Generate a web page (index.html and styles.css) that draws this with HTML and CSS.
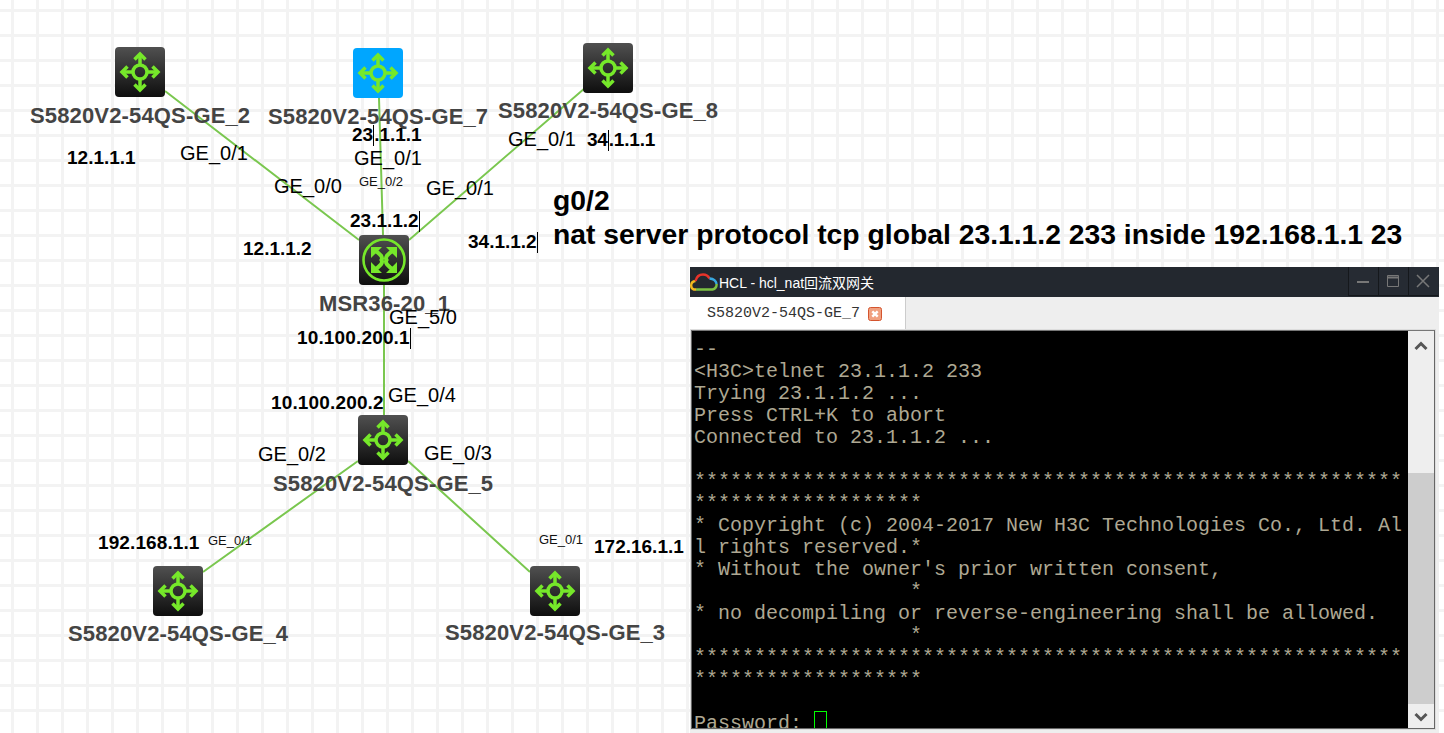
FILE: index.html
```html
<!DOCTYPE html>
<html lang="zh">
<head>
<meta charset="utf-8">
<title>HCL - hcl_nat回流双网关</title>
<link rel="stylesheet" href="styles.css">
</head>
<body>
<svg class="defs" width="0" height="0" aria-hidden="true">
  <defs>
    <symbol id="sw-glyph" viewBox="0 0 50 50">
      <g fill="none" stroke="#76e82a" stroke-width="3.500">
        <circle cx="25" cy="25" r="7"/>
        <path d="M25 18V7M25 32V43M18 25H7M32 25H43"/>
        <path d="M19.500 12.500L25 7l5.500 5.500M19.500 37.500L25 43l5.500-5.500M12.500 19.500L7 25l5.500 5.500M37.500 19.500L43 25l-5.500 5.500"/>
      </g>
    </symbol>
    <symbol id="rt-glyph" viewBox="0 0 50 50">
      <circle cx="25" cy="25" r="20.500" fill="none" stroke="#76e82a" stroke-width="2.600"/>
      <g fill="none" stroke="#76e82a" stroke-width="4">
        <path d="M15 15Q25 21 22.500 25 25 29 15 35M35 15Q25 21 27.500 25 25 29 35 35"/>
      </g>
      <g fill="#76e82a">
        <path d="M12 12h11l-11 11zM38 12h-11l11 11zM12 38h11l-11-11zM38 38h-11l11-11z"/>
      </g>
    </symbol>
  </defs>
</svg>

<main class="canvas">
  <svg class="links" width="1444" height="733" aria-hidden="true">
    <path d="M165 91L359 240M379 98L383 235M585 88L409 240M384 285V415M358 461L203 572M408 461L530 572"/>
  </svg>

  <div class="device sw2"><svg class="glyph"><use href="#sw-glyph"/></svg></div>
  <div class="device sw7"><svg class="glyph"><use href="#sw-glyph"/></svg></div>
  <div class="device sw8"><svg class="glyph"><use href="#sw-glyph"/></svg></div>
  <div class="device msr"><svg class="glyph"><use href="#rt-glyph"/></svg></div>
  <div class="device sw5"><svg class="glyph"><use href="#sw-glyph"/></svg></div>
  <div class="device sw4"><svg class="glyph"><use href="#sw-glyph"/></svg></div>
  <div class="device sw3"><svg class="glyph"><use href="#sw-glyph"/></svg></div>

  <div class="name n2">S5820V2-54QS-GE_2</div>
  <div class="name n7">S5820V2-54QS-GE_7</div>
  <div class="name n8">S5820V2-54QS-GE_8</div>
  <div class="name nm">MSR36-20_1</div>
  <div class="name n5">S5820V2-54QS-GE_5</div>
  <div class="name n4">S5820V2-54QS-GE_4</div>
  <div class="name n3">S5820V2-54QS-GE_3</div>

  <div class="ip i1">12.1.1.1</div>
  <div class="ip i2">12.1.1.2</div>
  <div class="ip i3">23<span class="caret"></span>.1.1.1</div>
  <div class="ip i4">23.1.1.2<span class="caret"></span></div>
  <div class="ip i5">34<span class="caret"></span>.1.1.1</div>
  <div class="ip i6">34.1.1.2<span class="caret"></span></div>
  <div class="ip i7">10.100.200.1<span class="caret"></span></div>
  <div class="ip i8">10.100.200.2</div>
  <div class="ip i9">192.168.1.1</div>
  <div class="ip i10">172.16.1.1</div>

  <div class="port p1">GE_0/1</div>
  <div class="port p2">GE_0/0</div>
  <div class="port p3">GE_0/1</div>
  <div class="port p4">GE_0/1</div>
  <div class="port p5">GE_0/1</div>
  <div class="port p6">GE_5/0</div>
  <div class="port p7">GE_0/4</div>
  <div class="port p8">GE_0/2</div>
  <div class="port p9">GE_0/3</div>
  <div class="port small p10">GE_0/2</div>
  <div class="port small p11">GE_0/1</div>
  <div class="port small p12">GE_0/1</div>

  <div class="note">
    <p>g0/2</p>
    <p>nat server protocol tcp global 23.1.1.2 233 inside 192.168.1.1 23</p>
  </div>

  <section class="window">
    <header class="titlebar">
      <svg class="logo" width="28" height="18" viewBox="0 0 28 18" fill="none" stroke-width="2.400">
        <path d="M6 16.500H4Q1 15.500 1.200 12 1.500 8.500 5.500 8" stroke="#f2b81e"/>
        <path d="M5.500 8Q7 1.500 13 1.500 17.500 1.500 19.500 5.500" stroke="#e8332a"/>
        <path d="M19.500 5.500Q25.800 6 26.600 11" stroke="#37a8e0"/>
        <path d="M26.600 11Q26.800 15.500 22.500 16.500H6" stroke="#7cc243"/>
      </svg>
      <span class="title">HCL - hcl_nat回流双网关</span>
      <div class="winbtns">
        <button class="winbtn" aria-label="minimize"><svg width="14" height="14" viewBox="0 0 14 14"><path d="M1 8H13" stroke="#777" stroke-width="2"/></svg></button>
        <button class="winbtn" aria-label="maximize"><svg width="14" height="14" viewBox="0 0 14 14" fill="none" stroke="#777"><path d="M1.500 1.500H12.500V12.500H1.500Z"/><path d="M1 3.500H13" stroke-width="2"/></svg></button>
        <button class="winbtn" aria-label="close"><svg width="14" height="14" viewBox="0 0 14 14"><path d="M1 1L13 13M13 1L1 13" stroke="#777" stroke-width="1.500"/></svg></button>
      </div>
    </header>
    <nav class="tabs">
      <div class="tab">
        <span>S5820V2-54QS-GE_7</span>
        <svg class="tabclose" width="14" height="14" viewBox="0 0 14 14"><rect x=".5" y=".5" width="13" height="13" rx="2" fill="#f0a080" stroke="#d4542e"/><path d="M4.300 4.300L9.700 9.700M9.700 4.300L4.300 9.700" stroke="#fff" stroke-width="2.400"/></svg>
      </div>
    </nav>
    <div class="termbox">
      <pre class="terminal">--
&lt;H3C&gt;telnet 23.1.1.2 233
Trying 23.1.1.2 ...
Press CTRL+K to abort
Connected to 23.1.1.2 ...

***********************************************************
*******************
* Copyright (c) 2004-2017 New H3C Technologies Co., Ltd. Al
l rights reserved.*
* Without the owner's prior written consent,
                  *
* no decompiling or reverse-engineering shall be allowed.
                  *
***********************************************************
*******************

Password: <span class="cursor"></span></pre>
      <div class="scrollbar">
        <svg width="14" height="10" viewBox="0 0 14 10"><path d="M1.500 8L7 2.500 12.500 8" fill="none" stroke="#555" stroke-width="3"/></svg>
        <div class="track"><div class="thumb"></div></div>
        <svg width="14" height="10" viewBox="0 0 14 10"><path d="M1.500 2L7 7.500 12.500 2" fill="none" stroke="#555" stroke-width="3"/></svg>
      </div>
    </div>
  </section>
</main>
</body>
</html>
```
FILE: styles.css
```css
* { box-sizing: border-box; }
html, body { margin: 0; padding: 0; height: 733px; overflow: hidden; background: #fff; }
.defs { position: absolute; }

.canvas {
  position: relative;
  width: 1444px;
  height: 733px;
  overflow: hidden;
  font-family: "Liberation Sans", Arial, sans-serif;
  background-color: #fff;
  background-image:
    repeating-linear-gradient(to bottom, transparent 0 9px, #f3f3f3 9px 12px, transparent 12px 25px),
    repeating-linear-gradient(to right, transparent 0 11px, #f3f3f3 11px 14px, transparent 14px 25px);
}

.links { position: absolute; left: 0; top: 0; }
.links path { fill: none; stroke: #7ac74f; stroke-width: 2; }

.device {
  position: absolute;
  width: 50px;
  height: 50px;
  border-radius: 4px;
  background: linear-gradient(#505050, #0e0e0e);
}
.glyph { display: block; width: 50px; height: 50px; }
.sw2 { left: 115px; top: 47px; }
.sw7 { left: 353px; top: 48px; background: #00a6ff; }
.sw8 { left: 583px; top: 43px; }
.msr { left: 359px; top: 235px; }
.sw5 { left: 358px; top: 415px; }
.sw4 { left: 153px; top: 566px; }
.sw3 { left: 530px; top: 566px; }

.name, .ip, .port { position: absolute; white-space: nowrap; line-height: 24px; }
.name { font-size: 22px; font-weight: 700; color: #444; letter-spacing: .15px; }
.n2 { left: 30px; top: 104px; }
.n7 { left: 268px; top: 105px; }
.n8 { left: 498px; top: 99px; }
.nm { left: 319px; top: 292px; }
.n5 { left: 273px; top: 472px; }
.n4 { left: 68px; top: 622px; }
.n3 { left: 445px; top: 621px; }

.ip { font-size: 19px; font-weight: 700; color: #000; }
.i1 { left: 67px; top: 146px; }
.i2 { left: 243px; top: 237px; }
.i3 { left: 352px; top: 123px; }
.i4 { left: 350px; top: 209px; }
.i5 { left: 587px; top: 128px; letter-spacing: -.2px; }
.i6 { left: 468px; top: 230px; }
.i7 { left: 297px; top: 326px; letter-spacing: .15px; }
.i8 { left: 271px; top: 391px; letter-spacing: .15px; }
.i9 { left: 98px; top: 531px; letter-spacing: .1px; }
.i10 { left: 594px; top: 535px; }
.caret {
  display: inline-block;
  width: 0;
  height: 21px;
  margin-bottom: -5px;
  border-left: 1px solid #000;
}

.port { font-size: 20px; color: #000; }
.port.small { font-size: 13px; line-height: 16px; color: #111; }
.p1 { left: 180px; top: 141px; }
.p2 { left: 274px; top: 174px; }
.p3 { left: 354px; top: 146px; }
.p4 { left: 426px; top: 176px; }
.p5 { left: 508px; top: 127px; }
.p6 { left: 389px; top: 305px; }
.p7 { left: 388px; top: 383px; }
.p8 { left: 258px; top: 442px; }
.p9 { left: 424px; top: 441px; }
.p10 { left: 359px; top: 174px; }
.p11 { left: 208px; top: 533px; }
.p12 { left: 539px; top: 532px; }

.note {
  position: absolute;
  left: 553px;
  top: 183px;
  font-size: 28.3px;
  font-weight: 700;
  color: #000;
  line-height: 34px;
  white-space: nowrap;
}
.note p { margin: 0; }

.window {
  position: absolute;
  left: 690px;
  top: 267px;
  width: 749px;
  height: 466px;
  display: flex;
  flex-direction: column;
  background: #eee;
}
.titlebar {
  flex: none;
  height: 30px;
  display: flex;
  align-items: center;
  background: #23282f;
  color: #fff;
}
.logo { flex: none; }
.title { margin-left: 1px; font-size: 14px; font-family: "Liberation Sans", "Noto Sans CJK SC", sans-serif; }
.winbtns { margin-left: auto; margin-right: 1px; display: flex; height: 100%; }
.winbtn {
  width: 30px;
  height: 29px;
  padding: 0 2px 0 0;
  display: flex;
  align-items: center;
  justify-content: center;
  background: #262b33;
  border: 0;
  border-left: 1px solid #15181c;
  border-bottom: 1px solid #15181c;
}
.tabs { flex: none; height: 33px; display: flex; }
.tab {
  width: 216px;
  height: 33px;
  padding-left: 17px;
  display: flex;
  align-items: center;
  gap: 8px;
  background: #fff;
  border-right: 1px solid #ccc;
  font-family: "Liberation Mono", monospace;
  font-size: 15px;
  color: #333;
}
.termbox {
  flex: 1;
  display: flex;
  margin: 0 4px 4px 1px;
  border: 1px solid #666;
  border-top-color: #777;
  box-shadow: 0 0 0 1px #ddd;
  min-height: 0;
}
.terminal {
  flex: 1;
  margin: 0;
  padding: 8px 0 0 2px;
  background: #000;
  color: #aea893;
  font-family: "Liberation Mono", "Courier New", monospace;
  font-size: 20px;
  line-height: 22px;
  overflow: hidden;
  white-space: pre;
}
.cursor {
  display: inline-block;
  width: 13px;
  height: 18px;
  margin-top: -3px;
  border: 1px solid #00ff00;
}
.scrollbar {
  flex: none;
  width: 26px;
  display: flex;
  flex-direction: column;
  align-items: center;
  background: #eee;
  padding: 10px 0 6px;
}
.track { flex: 1; width: 100%; display: flex; flex-direction: column; justify-content: flex-end; padding-bottom: 8px; }
.thumb { height: 231px; background: #cdcdcd; }
```
